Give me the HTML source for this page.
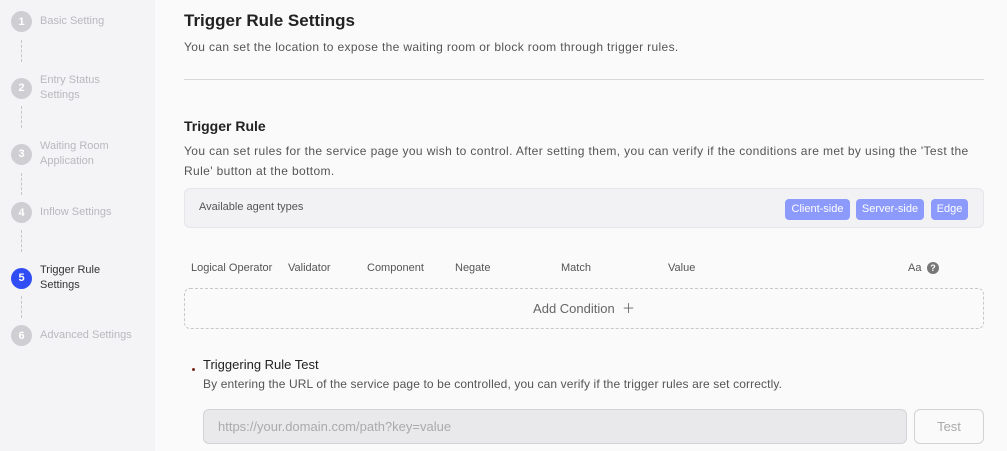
<!DOCTYPE html>
<html><head><style>
*{margin:0;padding:0;box-sizing:border-box}
body{width:1007px;height:451px;overflow:hidden;background:#fafafa;font-family:"Liberation Sans",sans-serif;position:relative}
.side{position:absolute;left:0;top:0;width:155px;height:451px;background:#f4f4f6}
.step{position:absolute;left:11px;display:flex;align-items:center}
.c{width:21px;height:21px;border-radius:50%;background:#cfcfd3;color:#fff;font-size:11px;font-weight:bold;display:flex;align-items:center;justify-content:center;flex:none}
.t{margin-left:8px;font-size:11px;color:#b9b9be;line-height:15px}
.dash{position:absolute;left:21px;width:0;border-left:1px dashed #c5c5ca}
h1{position:absolute;left:184px;top:11px;font-size:17px;font-weight:bold;color:#222}
.p{position:absolute;font-size:12px;color:#555;line-height:20px}
h2{position:absolute;left:184px;top:118px;font-size:14px;font-weight:bold;color:#222}
.box{position:absolute;left:184px;top:188px;width:800px;height:40px;background:#f2f2f4;border:1px solid #e6e6ea;border-radius:6px}
.tag{position:absolute;top:10px;height:21px;background:#8c9afc;color:#fff;font-size:11px;border-radius:4px;line-height:21px;text-align:center}
.th{position:absolute;top:262px;font-size:11px;color:#555}
.add{position:absolute;left:184px;top:288px;width:800px;height:41px;border:1px dashed #c8c8cc;border-radius:6px;text-align:center;line-height:40px;font-size:13px;color:#666}
.in{position:absolute;left:203px;top:409px;width:704px;height:35px;background:#e9e9ec;border:1px solid #d3d3d7;border-radius:6px;font-size:13px;color:#aaa;line-height:33px;padding-left:14px}
.btn{position:absolute;left:914px;top:409px;width:70px;height:35px;border:1px solid #d3d3d7;border-radius:6px;font-size:13px;color:#aaa;text-align:center;line-height:33px;background:#fafafa}
</style></head><body>
<div class="side">
<div class="step" style="top:11px"><div class="c">1</div><div class="t">Basic Setting</div></div>
<div class="dash" style="top:40px;height:22px"></div>
<div class="step" style="top:73px"><div class="c">2</div><div class="t">Entry Status<br>Settings</div></div>
<div class="dash" style="top:106px;height:22px"></div>
<div class="step" style="top:139px"><div class="c">3</div><div class="t">Waiting Room<br>Application</div></div>
<div class="dash" style="top:173px;height:22px"></div>
<div class="step" style="top:202px"><div class="c">4</div><div class="t">Inflow Settings</div></div>
<div class="dash" style="top:230px;height:22px"></div>
<div class="step" style="top:263px"><div class="c" style="background:#2f4cf5">5</div><div class="t" style="color:#333">Trigger Rule<br>Settings</div></div>
<div class="dash" style="top:296px;height:22px"></div>
<div class="step" style="top:325px"><div class="c">6</div><div class="t">Advanced Settings</div></div>
</div>
<h1>Trigger Rule Settings</h1>
<div class="p" style="left:184px;top:37px;letter-spacing:0.35px">You can set the location to expose the waiting room or block room through trigger rules.</div>
<div style="position:absolute;left:184px;top:79px;width:800px;height:1px;background:#d8d8dc"></div>
<h2>Trigger Rule</h2>
<div class="p" style="left:184px;top:141px;width:820px;letter-spacing:0.38px">You can set rules for the service page you wish to control. After setting them, you can verify if the conditions are met by using the 'Test the<br>Rule' button at the bottom.</div>
<div class="box">
<div style="position:absolute;left:14px;top:12px;font-size:11px;color:#555">Available agent types</div>
<div class="tag" style="left:600px;width:65px">Client-side</div>
<div class="tag" style="left:671px;width:68px">Server-side</div>
<div class="tag" style="left:746px;width:37px">Edge</div>
</div>
<div class="th" style="left:191px">Logical Operator</div>
<div class="th" style="left:288px">Validator</div>
<div class="th" style="left:367px">Component</div>
<div class="th" style="left:455px">Negate</div>
<div class="th" style="left:561px">Match</div>
<div class="th" style="left:668px">Value</div>
<div class="th" style="left:908px">Aa</div>
<div style="position:absolute;left:927px;top:262px;width:12px;height:12px;border-radius:50%;background:#777;color:#fff;font-size:9px;font-weight:bold;text-align:center;line-height:12px">?</div>
<div class="add">Add Condition &nbsp;＋</div>
<div style="position:absolute;left:192px;top:368px;width:3px;height:3px;border-radius:50%;background:#7a2a1a"></div>
<div style="position:absolute;left:203px;top:357px;font-size:13px;color:#222">Triggering Rule Test</div>
<div class="p" style="left:203px;top:374px;letter-spacing:0.12px">By entering the URL of the service page to be controlled, you can verify if the trigger rules are set correctly.</div>
<div class="in">https://your.domain.com/path?key=value</div>
<div class="btn">Test</div>
</body></html>
